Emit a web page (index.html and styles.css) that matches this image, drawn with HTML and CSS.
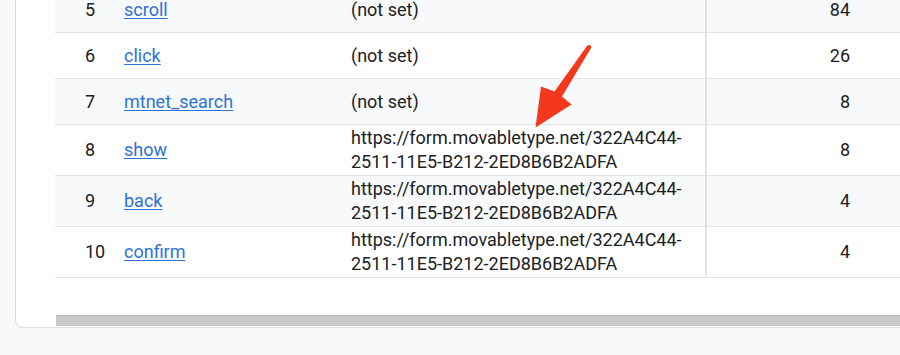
FILE: index.html
```html
<!DOCTYPE html>
<html lang="en">
<head>
    <meta charset="UTF-8">
    <meta name="viewport" content="width=device-width, initial-scale=1.0">
    <title>Events report</title>
    <link rel="stylesheet" href="styles.css">
</head>
<body>

    <div class="report">
        <table class="events">
            <colgroup>
                <col class="col-idx">
                <col class="col-name">
                <col class="col-dim">
                <col class="col-num">
            </colgroup>
            <tbody>
                <tr class="alt">
                    <td class="idx">5</td>
                    <td class="name"><a href="#">scroll</a></td>
                    <td class="dim">(not set)</td>
                    <td class="num">84</td>
                </tr>
                <tr>
                    <td class="idx">6</td>
                    <td class="name"><a href="#">click</a></td>
                    <td class="dim">(not set)</td>
                    <td class="num">26</td>
                </tr>
                <tr class="alt">
                    <td class="idx">7</td>
                    <td class="name"><a href="#">mtnet_search</a></td>
                    <td class="dim">(not set)</td>
                    <td class="num">8</td>
                </tr>
                <tr>
                    <td class="idx">8</td>
                    <td class="name"><a href="#">show</a></td>
                    <td class="dim">https://form.movabletype.net/322A4C44-2511-11E5-B212-2ED8B6B2ADFA</td>
                    <td class="num">8</td>
                </tr>
                <tr class="alt">
                    <td class="idx">9</td>
                    <td class="name"><a href="#">back</a></td>
                    <td class="dim">https://form.movabletype.net/322A4C44-2511-11E5-B212-2ED8B6B2ADFA</td>
                    <td class="num">4</td>
                </tr>
                <tr>
                    <td class="idx">10</td>
                    <td class="name"><a href="#">confirm</a></td>
                    <td class="dim">https://form.movabletype.net/322A4C44-2511-11E5-B212-2ED8B6B2ADFA</td>
                    <td class="num">4</td>
                </tr>
            </tbody>
        </table>
        <div class="hscroll"><div class="thumb"></div></div>
    </div>

    <!-- red callout arrow pointing at the form URL -->
    <svg class="callout" width="900" height="355" viewBox="0 0 900 355">
        <polygon points="587.3,45.6 554.5,91.5 541,86.5 535.5,127.5 571.5,104.5 562,96.5 590.9,48.3" fill="#f4381e"/>
        <circle cx="589.1" cy="47" r="2.1" fill="#f4381e"/>
    </svg>

</body>
</html>
```

FILE: styles.css
```css
html, body {
    overflow: hidden;
}

body {
    margin: 0;
    background-color: #f8f9fa;
    font-family: Roboto, "Liberation Sans", Arial, sans-serif;
    color: #202124;
}

.report {
    margin: -13px -60px 0 15px;
    padding: 0 0 1px 39px;
    background-color: #fff;
    border-left: 1px solid #dadce0;
    border-bottom: 1px solid #dadce0;
    border-bottom-left-radius: 8px;
}

.events {
    width: 851px;
    border-collapse: collapse;
    table-layout: fixed;
    font-size: 18px;
    line-height: 24px;
}

.col-idx { width: 57px; }
.col-name { width: 227px; }
.col-dim { width: 367px; }

.events td {
    height: 43px;
    padding: 0 12px;
    border-bottom: 1px solid #e3e3e5;
    vertical-align: middle;
}

.events tr.alt td {
    background-color: #f8f9fa;
}

.events td.idx {
    padding-left: 30px;
    padding-right: 0;
}

.events td.name a {
    color: #2d72d9;
    text-decoration: underline;
    text-underline-offset: 2px;
}

.events td.dim {
    padding-top: 1px;
    padding-bottom: 1px;
}

.events td.num {
    text-align: right;
    padding-right: 56px;
    border-left: 2px solid #e3e3e5;
}

.hscroll {
    margin-top: 37px;
    height: 11px;
}

.thumb {
    margin-left: 1px;
    height: 10px;
    background-color: #c9c9c9;
    border-top: 1px solid #b8b8b8;
}

.callout {
    position: absolute;
    top: 0;
    left: 0;
    pointer-events: none;
}
```
